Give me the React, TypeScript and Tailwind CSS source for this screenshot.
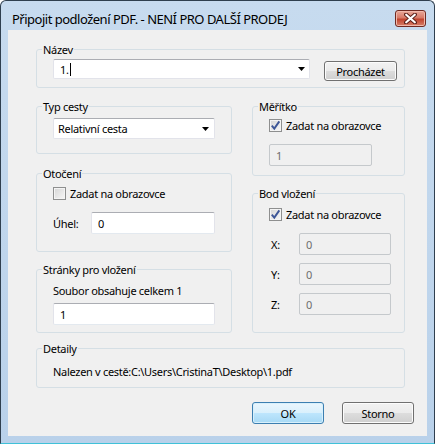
import type { ReactNode } from "react";

function Group({ title, className = "", inner = "", children }: { title: string; className?: string; inner?: string; children: ReactNode }) {
  return (
    <fieldset className={"rounded-[3px] border border-[#d5dfe5] pl-[5px] " + className}>
      <legend className="px-[1px] leading-[15px]">{title}</legend>
      <div className={"pl-[11px] pr-[16px] " + inner}>{children}</div>
    </fieldset>
  );
}

function Check({ checked }: { checked?: boolean }) {
  return (
    <span className="flex h-[13px] w-[13px] shrink-0 items-center justify-center border border-[#8e8f8f] bg-[linear-gradient(135deg,#d6d6d6,#f7f7f7)] shadow-[inset_0_0_0_1px_#f4f4f4]">
      {checked && (
        <svg width="11" height="11" viewBox="0 0 11 11">
          <path d="M1.8 5.6 L4.3 8.6 L9.3 1.4" stroke="#3d5697" strokeWidth="1.9" fill="none" />
        </svg>
      )}
    </span>
  );
}

function CheckRow({ checked }: { checked?: boolean }) {
  return (
    <div className="flex h-[15px] items-center gap-[4px] whitespace-nowrap leading-[15px]">
      <Check checked={checked} />
      <span>Zadat na obrazovce</span>
    </div>
  );
}

function TextBox({ value, className = "", disabled }: { value: string; className?: string; disabled?: boolean }) {
  return (
    <div
      className={
        "flex h-[22px] items-center rounded-[2px] border px-[6px] " +
        (disabled
          ? "border-[#c5c9cc] bg-[#f0f0f0] text-[#6d6d6d] "
          : "border-[#e2e3ea] border-t-[#abadb3] border-b-[#e3e9ef] bg-white ") +
        className
      }
    >
      {value}
    </div>
  );
}

function Arrow() {
  return (
    <svg width="7" height="4" viewBox="0 0 7 4" className="ml-auto">
      <path d="M0 0h7L3.5 4z" fill="#000" />
    </svg>
  );
}

function Button({ label, primary }: { label: string; primary?: boolean }) {
  return (
    <div
      className={
        "flex h-[22px] w-[72px] items-center justify-center rounded-[3px] border " +
        (primary
          ? "border-[#3c7fb1] bg-[linear-gradient(#eaf6fd_0%,#d9f0fc_50%,#bee6fd_50%,#a7d9f5_100%)] shadow-[inset_0_0_0_1px_#d8f0fc]"
          : "border-[#707070] bg-[linear-gradient(#f2f2f2_0%,#ebebeb_50%,#dddddd_50%,#cfcfcf_100%)] shadow-[inset_0_0_0_1px_#fcfcfc]")
      }
    >
      {label}
    </div>
  );
}

export default function App() {
  return (
    <div className="flex h-[444px] w-[435px] flex-col rounded-t-[6px] border border-[#2f3f4f] border-b-[#3fc1d8] bg-[linear-gradient(#c7dbef,#b9d1ea)] font-['Noto_Sans',sans-serif] text-[11px] leading-[15px] tracking-[-0.3px] text-black">
      <div className="flex h-[29px] items-start pl-[11px] pr-[8px]">
        <span className="mt-[11px] text-[13px] tracking-[-0.5px]">Připojit podložení PDF. - NENÍ PRO DALŠÍ PRODEJ</span>
        <div className="ml-auto mt-[9px] flex h-[17px] w-[31px] items-center justify-center rounded-[3px] border border-[#6f2a22] bg-[linear-gradient(#e8a89a_0%,#d77a68_45%,#c0442f_55%,#d7806a_100%)] shadow-[inset_0_0_0_1px_#f0b8ab]">
          <svg width="13" height="11" viewBox="0 0 13 11">
            <path d="M2 1.5 L11 9.5 M11 1.5 L2 9.5" stroke="#5a1f18" strokeWidth="4" strokeLinecap="round" />
            <path d="M2.2 1.7 L10.8 9.3 M10.8 1.7 L2.2 9.3" stroke="#fff" strokeWidth="2.2" strokeLinecap="round" />
          </svg>
        </div>
      </div>

      <div className="mx-[7px] flex h-[406px] flex-col bg-[#f0f0f0]">
        <div className="flex flex-col pl-[28px] pr-[22px] pt-[12px]">
          <Group title="Název" inner="flex items-start pt-[2px] pb-[6px] !pr-[7px]">
            <div className="flex h-[20px] w-[257px] items-center rounded-[2px] border border-[#e2e3ea] border-t-[#abadb3] bg-white pl-[6px] pr-[4px]">
              <span>1.</span>
              <span className="ml-[1px] h-[13px] w-[1px] bg-black" />
              <Arrow />
            </div>
            <div className="ml-[14px] mt-[2px]">
              <div className="flex h-[20px] w-[73px] items-center justify-center rounded-[3px] border border-[#707070] bg-[linear-gradient(#f2f2f2_0%,#ebebeb_50%,#dddddd_50%,#cfcfcf_100%)] shadow-[inset_0_0_0_1px_#fcfcfc]">
                Procházet
              </div>
            </div>
          </Group>

          <div className="mt-[11px] grid grid-cols-[196px_153px] gap-x-[20px]">
            <div className="flex flex-col">
              <Group title="Typ cesty" inner="pt-[4px] pb-[14px]">
                <div className="flex h-[21px] items-center rounded-[2px] border border-[#e2e3ea] border-t-[#abadb3] bg-white pl-[4px] pr-[5px]">
                  <span>Relativní cesta</span>
                  <Arrow />
                </div>
              </Group>
              <Group title="Otočení" className="mt-[12px]" inner="pt-[5px] pb-[17px]">
                <CheckRow />
                <div className="mt-[11px] flex items-center">
                  <span className="w-[38px]">Úhel:</span>
                  <TextBox value="0" className="flex-1" />
                </div>
              </Group>
              <Group title="Stránky pro vložení" className="mt-[10px]" inner="pt-[6px] pb-[7px]">
                <div>Soubor obsahuje celkem 1</div>
                <TextBox value="1" className="mt-[5px]" />
              </Group>
            </div>

            <div className="flex flex-col">
              <Group title="Měřítko" inner="pt-[4px] pb-[9px]">
                <CheckRow checked />
                <TextBox value="1" disabled className="mt-[11px] w-[103px]" />
              </Group>
              <Group title="Bod vložení" className="mt-[10px]" inner="pt-[6px] pb-[17px] !pr-[0px]">
                <CheckRow checked />
                {["X:", "Y:", "Z:"].map((l, i) => (
                  <div key={l} className={"flex items-center " + (i === 0 ? "mt-[11px]" : "mt-[8px]")}>
                    <span className="w-[30px] pl-[2px]">{l}</span>
                    <TextBox value="0" disabled className="w-[92px]" />
                  </div>
                ))}
              </Group>
            </div>
          </div>

          <Group title="Detaily" className="mt-[8px]" inner="pt-[8px] pb-[8px]">
            <div>{"Nalezen v cestě:C:\\Users\\CristinaT\\Desktop\\1.pdf"}</div>
          </Group>
        </div>

        <div className="mt-[14px] flex justify-end gap-[18px] pr-[13px]">
          <Button label="OK" primary />
          <Button label="Storno" />
        </div>
      </div>
    </div>
  );
}
